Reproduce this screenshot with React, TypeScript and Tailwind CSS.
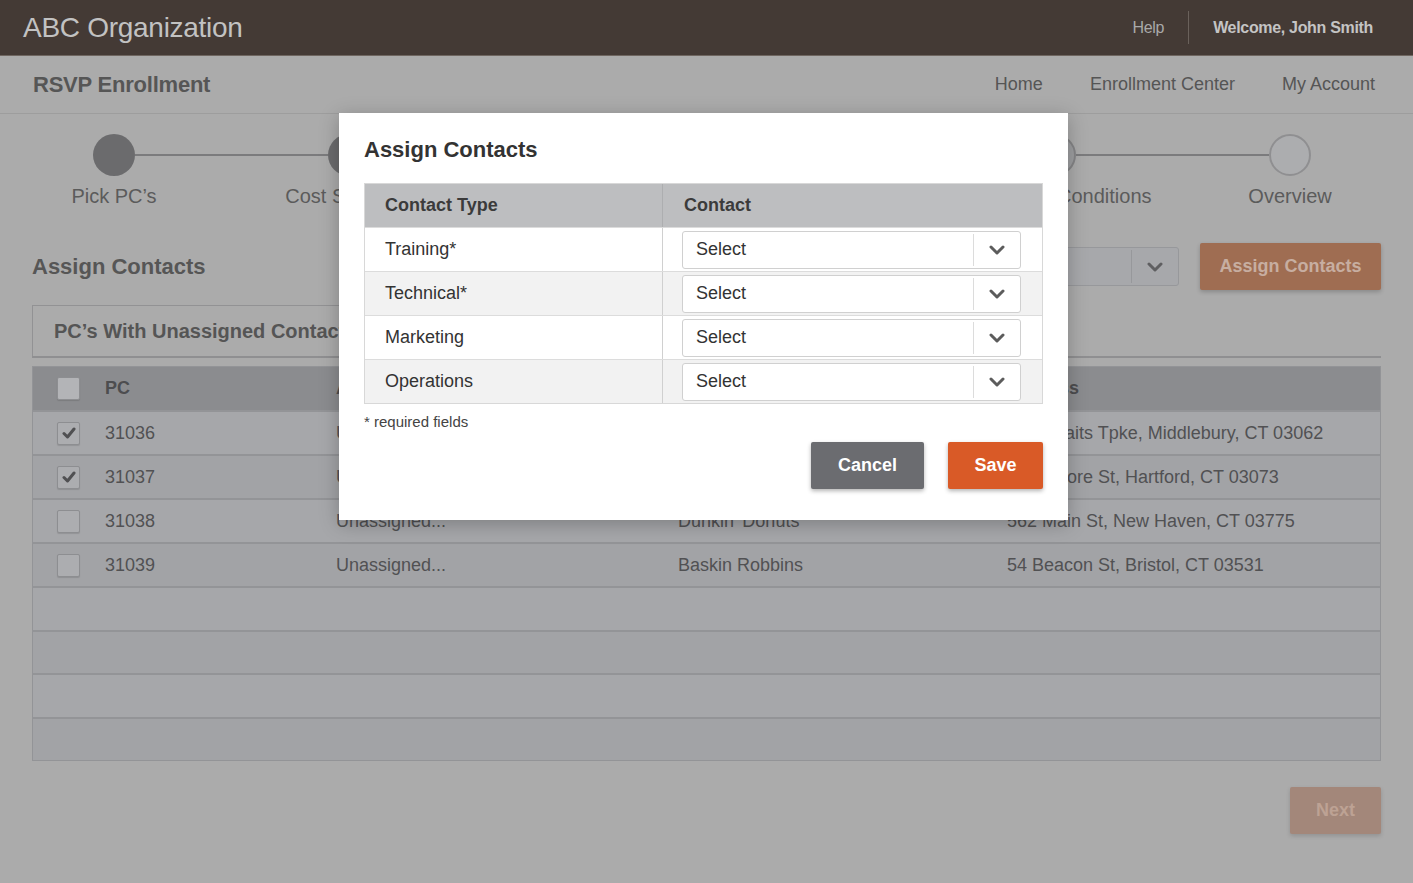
import React from 'react';

const font = { fontFamily: '"Liberation Sans", Arial, sans-serif' };

function Chevron({ color = '#5f5f5f' }: { color?: string }) {
  return (
    <svg width="16" height="10" viewBox="0 0 16 10" aria-hidden>
      <polyline points="2,2 8,8 14,2" fill="none" stroke={color} strokeWidth="3" strokeLinecap="round" strokeLinejoin="round" />
    </svg>
  );
}

function Check() {
  return (
    <svg width="14" height="12" viewBox="0 0 14 12" aria-hidden>
      <polyline points="2,6.5 5.5,10 12,2" fill="none" stroke="#505052" strokeWidth="3" strokeLinecap="round" strokeLinejoin="round" />
    </svg>
  );
}

const steps = [
  { label: "Pick PC’s", kind: 'done' },
  { label: 'Cost Structure', kind: 'done' },
  { label: 'Assign Contacts', kind: 'current' },
  { label: 'Review', kind: 'todo' },
  { label: 'Terms and Conditions', kind: 'todo' },
  { label: 'Overview', kind: 'empty' },
];

const rows = [
  { pc: '31036', checked: true, contact: 'Unassigned...', name: 'Subway', address: '125 Straits Tpke, Middlebury, CT 03062' },
  { pc: '31037', checked: true, contact: 'Unassigned...', name: 'Starbucks', address: '100 Moore St, Hartford, CT 03073' },
  { pc: '31038', checked: false, contact: 'Unassigned...', name: 'Dunkin’ Donuts', address: '562 Main St, New Haven, CT 03775' },
  { pc: '31039', checked: false, contact: 'Unassigned...', name: 'Baskin Robbins', address: '54 Beacon St, Bristol, CT 03531' },
];

const contactTypes = ['Training*', 'Technical*', 'Marketing', 'Operations'];

function Checkbox({ checked, light }: { checked?: boolean; light?: boolean }) {
  return (
    <div
      className={`w-[23px] h-[23px] rounded-[2px] border border-[#8d8e91] flex items-center justify-center shadow-[0_1px_1px_rgba(0,0,0,0.12)] ${
        light ? 'bg-[#b3b4b7]' : 'bg-[#acadb0]'
      }`}
    >
      {checked && <Check />}
    </div>
  );
}

function SelectBox() {
  return (
    <div className="w-[339px] h-[38px] bg-white border border-[#d0d0d0] rounded-[3px] flex items-center">
      <div className="flex-1 pl-[13px] text-[18px] text-[#333]">Select</div>
      <div className="w-px h-[32px] bg-[#dcdcdc]" />
      <div className="w-[46px] flex items-center justify-center">
        <Chevron color="#5c5c5c" />
      </div>
    </div>
  );
}

export default function App() {
  return (
    <div className="relative w-full h-[883px] overflow-hidden bg-[#ababab]" style={font}>
      {/* top bar */}
      <header className="h-[56px] bg-[#443a35] border-b border-[#6f6660] flex items-center justify-between pl-[23px] pr-[40px]">
        <div className="text-[28px] text-[#c2c2c2] tracking-[-0.01em]">ABC Organization</div>
        <div className="flex items-center">
          <div className="text-[16px] text-[#a9a9a9] tracking-[-0.02em]">Help</div>
          <div className="w-px h-[33px] bg-[#6a615b] mx-[24px]" />
          <div className="text-[16px] font-bold text-[#c4c4c4] tracking-[-0.02em]">Welcome, John Smith</div>
        </div>
      </header>

      {/* sub nav */}
      <nav className="h-[58px] border-b border-[#9d9d9d] flex items-center justify-between pl-[33px] pr-[38px]">
        <div className="text-[22px] font-bold text-[#565656] tracking-[-0.01em]">RSVP Enrollment</div>
        <div className="flex items-center gap-[47px] text-[18px] text-[#555]">
          <span>Home</span>
          <span>Enrollment Center</span>
          <span>My Account</span>
        </div>
      </nav>

      <main className="px-[32px]">
        {/* steps */}
        <div className="flex items-start pt-[20px] ml-[61px] mr-[70px]">
          {steps.map((s, i) => (
            <React.Fragment key={s.label}>
              {i > 0 && <div className="flex-1 h-[2px] bg-[#7b7b7d] mt-[20px]" />}
              <div className="w-[42px] flex flex-col items-center">
                <div
                  className={`w-[42px] h-[42px] rounded-full ${
                    s.kind === 'done'
                      ? 'bg-[#6b6b6d]'
                      : s.kind === 'empty'
                      ? 'bg-[#acadaf] border-2 border-[#8f8f91]'
                      : 'bg-[#9e9fa1] border-2 border-[#858587]'
                  }`}
                />
                <div className="mt-[8px] whitespace-nowrap text-[20px] leading-[24px] text-[#5b5b5b]">{s.label}</div>
              </div>
            </React.Fragment>
          ))}
        </div>

        {/* heading row */}
        <div className="mt-[35px] flex items-center justify-between">
          <div className="text-[22px] font-bold text-[#565656]">Assign Contacts</div>
          <div className="flex items-center gap-[21px]">
            <div className="w-[220px] h-[39px] bg-[#a7a8ab] border border-[#97989b] rounded-[3px] flex items-center">
              <div className="flex-1" />
              <div className="w-px h-[33px] bg-[#97989b]" />
              <div className="w-[46px] flex items-center justify-center">
                <Chevron color="#5f5f61" />
              </div>
            </div>
            <div className="w-[181px] h-[47px] bg-[#9f6d52] rounded-[2px] flex items-center justify-center text-[18px] font-bold text-[#c7aea1] shadow-[0_2px_4px_rgba(0,0,0,0.2)]">
              Assign Contacts
            </div>
          </div>
        </div>

        {/* tab */}
        <div className="mt-[15px] border-b-2 border-[#8f8f91]">
          <div className="w-[380px] h-[51px] border-t border-l border-r border-[#929294] flex items-center pl-[21px] text-[20px] font-bold text-[#555]">
            PC’s With Unassigned Contacts
          </div>
        </div>

        {/* table */}
        <div className="mt-[8px] border border-[#939497]">
          <div className="h-[43px] bg-[#8b8c8f] flex items-center text-[18px] font-bold text-[#4d4d4f]">
            <div className="w-[72px] pl-[24px]">
              <Checkbox light />
            </div>
            <div className="w-[231px]">PC</div>
            <div className="w-[342px]">Assigned Contact</div>
            <div className="w-[329px]">Business</div>
            <div>Address</div>
          </div>
          {rows.map((r, i) => (
            <div
              key={r.pc}
              className={`h-[44px] border-t-2 border-[#939497] flex items-center text-[18px] text-[#515153] ${
                i % 2 === 0 ? 'bg-[#a6a7aa]' : 'bg-[#a2a3a6]'
              }`}
            >
              <div className="w-[72px] pl-[24px]">
                <Checkbox checked={r.checked} />
              </div>
              <div className="w-[231px]">{r.pc}</div>
              <div className="w-[342px]">{r.contact}</div>
              <div className="w-[329px]">{r.name}</div>
              <div>{r.address}</div>
            </div>
          ))}
          {[0, 1, 2, 3].map((i) => (
            <div
              key={i}
              className={`h-[43.5px] border-t-2 border-[#939497] ${i % 2 === 0 ? 'bg-[#a6a7aa]' : 'bg-[#a2a3a6]'}`}
            />
          ))}
        </div>

        <div className="mt-[26px] flex justify-end">
          <div className="w-[91px] h-[47px] bg-[#a3877a] rounded-[2px] flex items-center justify-center text-[18px] font-bold text-[#bda294] shadow-[0_2px_4px_rgba(0,0,0,0.15)]">
            Next
          </div>
        </div>
      </main>

      {/* modal */}
      <div className="absolute left-[339px] top-[113px] w-[729px] h-[407px] bg-white shadow-[0_4px_18px_rgba(0,0,0,0.25)] px-[25px] pt-[24px]">
        <div className="text-[22px] font-bold text-[#333] leading-[26px]">Assign Contacts</div>
        <div className="mt-[20px] border border-[#d8d8d8]">
          <div className="h-[43px] bg-[#bdbec0] flex items-center text-[18px] font-bold text-[#3b3b3b]">
            <div className="w-[298px] h-full flex items-center pl-[20px] border-r border-[#adaeb0]">Contact Type</div>
            <div className="pl-[21px]">Contact</div>
          </div>
          {contactTypes.map((t, i) => (
            <div
              key={t}
              className={`h-[44px] flex items-center border-t border-[#dcdcdc] ${i % 2 === 0 ? 'bg-white' : 'bg-[#f2f2f2]'}`}
            >
              <div className="w-[298px] h-full flex items-center pl-[20px] border-r border-[#d0d0d0] text-[18px] text-[#333]">
                {t}
              </div>
              <div className="pl-[19px]">
                <SelectBox />
              </div>
            </div>
          ))}
        </div>
        <div className="mt-[9px] text-[15px] leading-[18px] text-[#444]">* required fields</div>
        <div className="mt-[11px] flex justify-end gap-[24px]">
          <div className="w-[113px] h-[47px] bg-[#6b6c70] rounded-[2px] flex items-center justify-center text-[18px] font-bold text-white shadow-[0_2px_4px_rgba(0,0,0,0.3)]">
            Cancel
          </div>
          <div className="w-[95px] h-[47px] bg-[#d95a27] rounded-[2px] flex items-center justify-center text-[18px] font-bold text-white shadow-[0_2px_4px_rgba(0,0,0,0.3)]">
            Save
          </div>
        </div>
      </div>
    </div>
  );
}
